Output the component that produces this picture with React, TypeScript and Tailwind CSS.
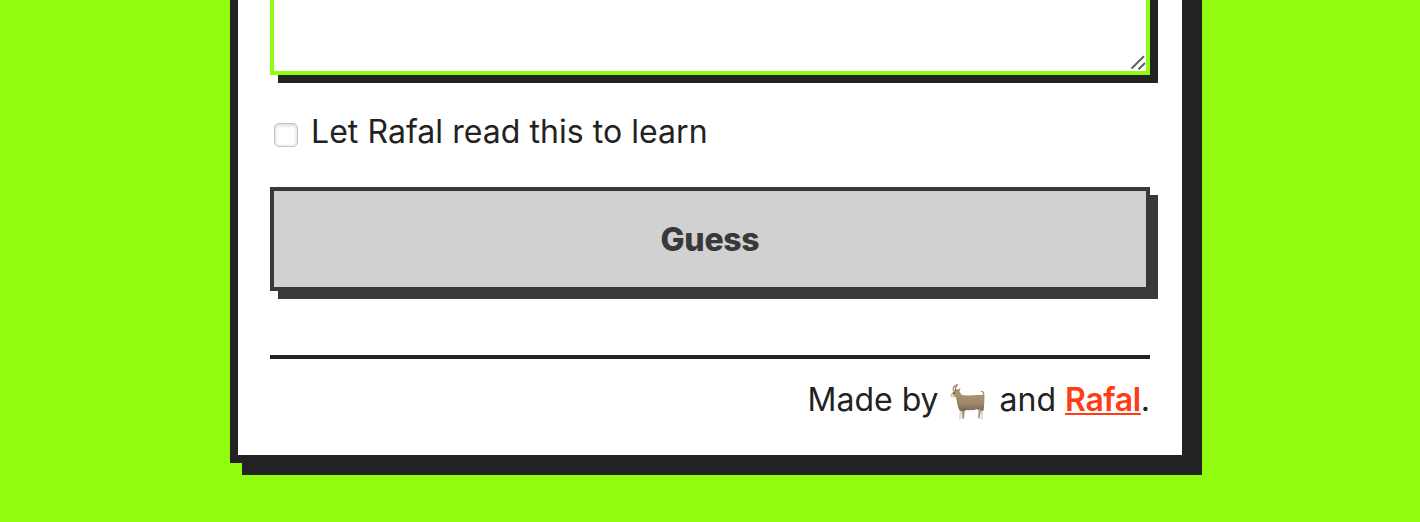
function Goat() {
  return (
    <svg role="img" aria-label="goat" viewBox="24 21 120 120" className="h-10 w-10 shrink-0">
      <defs>
        <linearGradient id="coat" x1="0" y1="0" x2="0" y2="1">
          <stop offset="0" stopColor="#ae9572" />
          <stop offset="0.6" stopColor="#a38c6c" />
          <stop offset="1" stopColor="#77654f" />
        </linearGradient>
      </defs>
      <path d="M67 98 L65 111 L67 131 L72 131 L74 112 L80 101 Z" fill="#a79a88" />
      <path d="M112 98 L116 111 L113 130 L118 130 L123 111 L122 98 Z" fill="#a79a88" />
      <path d="M57 96 L59 112 L57 130 L55 133 L63 133 L65 115 L71 101 Z" fill="#ded8ce" />
      <path d="M119 95 L124 110 L122 128 L120 133 L128 133 L129 113 L131 96 Z" fill="#ded8ce" />
      <path d="M42 47 L51 42 L57 48 L65 59 C80 63 96 61 111 60 C120 59 129 62 129 56 C130 52 126 51 122 50 C124 45 132 47 133 56 C134 78 132 91 131 104 C128 111 122 108 118 100 C103 103 89 104 75 103 C71 110 65 111 59 106 C53 96 51 82 49 68 L44 65 L35 66 L31 61 L36 55 Z" fill="url(#coat)" />
      <path d="M50 68 C55 78 54 91 59 104" fill="none" stroke="#7a6649" strokeWidth="2" />
      <path d="M70 102 C87 106 103 104 118 100" fill="none" stroke="#554839" strokeWidth="2.5" />
      <path d="M40 48 C38 38 43 31 53 29" fill="none" stroke="#a58e68" strokeWidth="4" />
      <path d="M46 48 C46 38 49 32 53 29" fill="none" stroke="#705b3d" strokeWidth="3" />
      <path d="M51 45 L62 40 L59 48 L52 51 Z" fill="#a68765" />
      <path d="M37 56 L32 61 L35 66 L44 65 L43 61 Z" fill="#d8d0c4" />
      <path d="M37 65 L40 73 L43 65 Z" fill="#e4dfd7" />
      <circle cx="43" cy="54" r="1.9" fill="#30251c" />
    </svg>
  );
}

export default function App() {
  return (
    <main className="flex h-[522px] flex-col items-center overflow-hidden bg-[#91fc0f] font-[Inter,sans-serif] text-[32px] leading-[48px] text-[#222222]">
      <section className="-mt-5 flex h-[483px] w-[960px] shrink-0 flex-col border-8 border-t-0 border-[#222222] bg-white px-8 shadow-[12px_12px_0_#222222]">
        <div className="flex h-[95px] shrink-0 items-end justify-end border-4 border-t-0 border-[#91fc0f] bg-white shadow-[8px_8px_0_#222222]">
          <svg viewBox="0 0 16 16" className="h-4 w-4" fill="none" stroke="#606060" strokeWidth="2">
            <path d="M1.5 13.5 14 1.2M8.5 14.3 15 8" />
          </svg>
        </div>
        <label className="mt-[33px] flex h-12 shrink-0 items-center">
          <input
            type="checkbox"
            className="mt-1.5 ml-1 h-6 w-6 shrink-0 appearance-none rounded-[5px] border border-[#c2c2c2] bg-white shadow-[inset_0_1px_4px_#00000030]"
          />
          <span className="ml-[13px] tracking-[0.05px] whitespace-nowrap">Let Rafal read this to learn</span>
        </label>
        <button className="mt-[31px] h-[104px] shrink-0 border-4 border-[#393939] bg-[#d1d1d1] pt-0.5 font-extrabold tracking-[-0.3px] text-[#393939] shadow-[8px_8px_0_#393939]">
          Guess
        </button>
        <footer className="mt-16 flex items-center justify-end border-t-4 border-[#222222] pt-[17px] whitespace-nowrap">
          <span>Made by</span>
          <span className="mt-1 mr-3 ml-[9px] flex"><Goat /></span>
          <span>and&nbsp;</span>
          <a href="#rafal" className="font-semibold tracking-[-0.4px] text-[#ff3c14] underline decoration-2 underline-offset-2">Rafal</a>
          <span>.</span>
        </footer>
      </section>
    </main>
  );
}
